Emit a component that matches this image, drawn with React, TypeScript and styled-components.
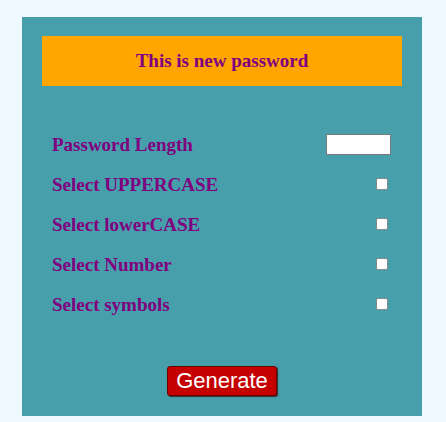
import React from "react";
import styled, { createGlobalStyle } from "styled-components";

const Global = createGlobalStyle`
  html, body { margin: 0; padding: 0; background: #f0f8ff; }
  body { padding: 17px 0 0 22px; }
`;

const Card = styled.div`
  width: 400px;
  height: 399px;
  box-sizing: border-box;
  background: #469fab;
  padding: 19px 20px 20px 20px;
  display: flex;
  flex-direction: column;
`;

const Header = styled.div`
  height: 50px;
  background: #ffa500;
  display: flex;
  align-items: center;
  justify-content: center;
  font-family: "Liberation Serif", "Times New Roman", serif;
  font-weight: bold;
  font-size: 19px;
  color: #800080;
`;

const Form = styled.div`
  margin-top: 39px;
  display: flex;
  flex-direction: column;
`;

const Row = styled.div`
  height: 40px;
  display: flex;
  align-items: center;
  justify-content: space-between;
  padding: 0 11px 0 10px;
`;

const Label = styled.label`
  font-family: "Liberation Serif", "Times New Roman", serif;
  font-weight: bold;
  font-size: 19px;
  color: #800080;
`;

const NumberInput = styled.input`
  width: 65px;
  height: 21px;
  box-sizing: border-box;
  border: 1px solid #7a7a7a;
  background: #fff;
  margin: -2px 0 0 0;
  padding: 0;
`;

const Check = styled.input`
  width: 12px;
  height: 12px;
  margin: -3px 3px 0 0;
  appearance: none;
  background: #fff;
  border: 1px solid #8a8a8a;
  border-radius: 2px;
  box-sizing: border-box;
`;

const Footer = styled.div`
  margin-top: 41px;
  display: flex;
  justify-content: center;
`;

const Button = styled.button`
  height: 30px;
  padding: 0 8px;
  background: #c40000;
  color: #fff;
  font-family: "Liberation Sans", Arial, sans-serif;
  font-size: 22px;
  border: 1px solid #6a0000;
  border-radius: 3px;
  box-shadow: 1px 1px 1px #3a2a2a;
  line-height: 1;
  cursor: pointer;
`;

const options = ["Select UPPERCASE", "Select lowerCASE", "Select Number", "Select symbols"];

export default function App() {
  return (
    <>
      <Global />
      <Card>
        <Header>This is new password</Header>
        <Form>
          <Row>
            <Label>Password Length</Label>
            <NumberInput type="text" />
          </Row>
          {options.map((o) => (
            <Row key={o}>
              <Label>{o}</Label>
              <Check type="checkbox" />
            </Row>
          ))}
        </Form>
        <Footer>
          <Button>Generate</Button>
        </Footer>
      </Card>
    </>
  );
}
